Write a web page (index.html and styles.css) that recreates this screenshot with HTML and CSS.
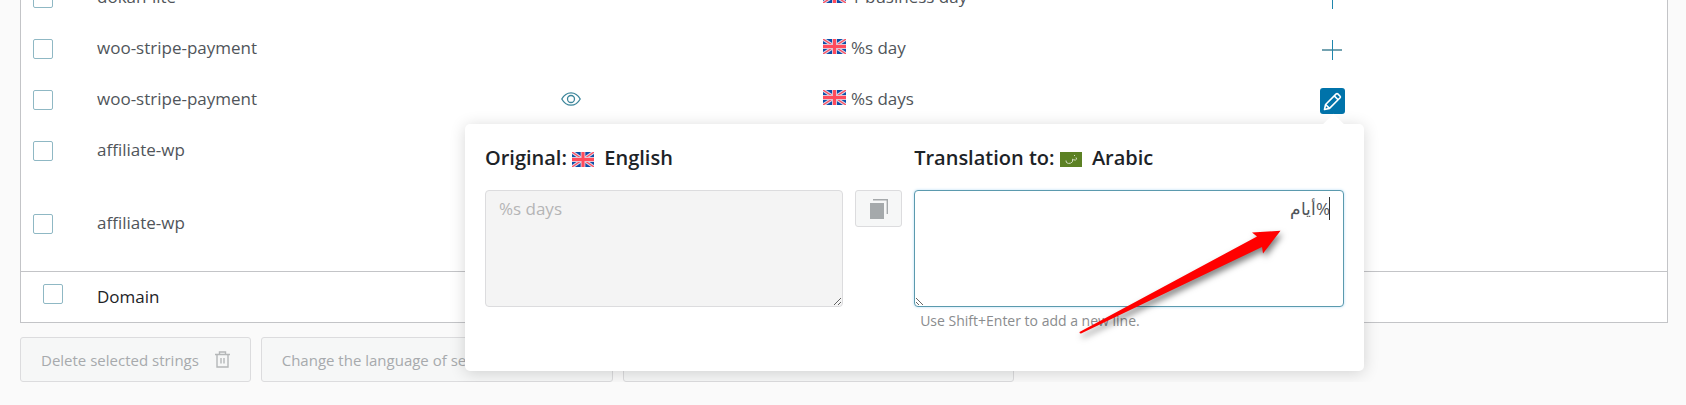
FILE: index.html
```
<!DOCTYPE html>
<html lang="en">
<head>
    <meta charset="UTF-8">
    <meta name="viewport" content="width=device-width, initial-scale=1.0">
    <title>String Translation</title>
    <link rel="stylesheet" href="styles.css">
</head>
<body>
  <svg width="0" height="0" class="sprite" aria-hidden="true">
    <symbol id="flag-en" viewBox="0 0 23 15" preserveAspectRatio="none">
      <rect width="23" height="15" fill="#0b4ea8"/>
      <path d="M0 0L23 15M23 0L0 15" stroke="#dcd5e6" stroke-width="3.4"/>
      <path d="M0 0L23 15M23 0L0 15" stroke="#ff4b5c" stroke-width="1.2"/>
      <path d="M11.5 0V15M0 7.5H23" stroke="#e3c3d2" stroke-width="5"/>
      <path d="M11.5 0V15M0 7.5H23" stroke="#ff4b5c" stroke-width="3"/>
    </symbol>
    <symbol id="plus" viewBox="0 0 20 20">
      <path d="M0 10H20" stroke="#74a3b1" stroke-width="2"/>
      <path d="M10.5 0V20" stroke="#1f86ad" stroke-width="1"/>
    </symbol>
  </svg>
  <div class="wrap">
    <table class="strings">
      <colgroup>
        <col class="col-check">
        <col class="col-domain">
        <col class="col-view">
        <col class="col-string">
        <col>
      </colgroup>
      <tbody>
        <tr>
          <td class="check"><input type="checkbox" aria-label="Select dokan-lite"></td>
          <td>dokan-lite</td>
          <td></td>
          <td><svg class="flag"><use href="#flag-en"/></svg>1 business day</td>
          <td class="action"><button class="add" aria-label="Add translation"><svg width="20" height="20"><use href="#plus"/></svg></button></td>
        </tr>
        <tr>
          <td class="check"><input type="checkbox" aria-label="Select woo-stripe-payment"></td>
          <td>woo-stripe-payment</td>
          <td></td>
          <td><svg class="flag"><use href="#flag-en"/></svg>%s day</td>
          <td class="action"><button class="add" aria-label="Add translation"><svg width="20" height="20"><use href="#plus"/></svg></button></td>
        </tr>
        <tr>
          <td class="check"><input type="checkbox" aria-label="Select woo-stripe-payment"></td>
          <td>woo-stripe-payment</td>
          <td>
            <button class="view" aria-label="View in page">
              <svg width="20" height="14" viewBox="0 0 20 14" fill="none" stroke="#3d869b" stroke-width="1.3">
                <path d="M.8 7C3 3 6.2 .8 10 .8S17 3 19.2 7C17 11 13.8 13.2 10 13.2S3 11 .8 7Z"/>
                <circle cx="10" cy="7" r="3.5"/>
              </svg>
            </button>
          </td>
          <td><svg class="flag"><use href="#flag-en"/></svg>%s days</td>
          <td class="action">
            <div class="editor">
              <button class="edit" aria-label="Edit translation">
                <svg width="19" height="19" viewBox="0 0 19 19" fill="none" stroke="#fff" stroke-width="1.6" stroke-linejoin="round">
                  <path d="M1.5 17.5L2.6 12.5L13.2 1.9Q14 1.2 14.8 1.9L17.1 4.2Q17.8 5 17.1 5.8L6.5 16.4Z"/>
                  <path d="M11.2 3.9L15.1 7.8M2.6 12.5L6.5 16.4"/>
                </svg>
              </button>
              <div class="popover">
                <div class="original">
                  <label for="original">Original: <svg class="flag"><use href="#flag-en"/></svg> English</label>
                  <textarea id="original" disabled>%s days</textarea>
                </div>
                <button class="copy" aria-label="Copy original" disabled>
                  <svg width="18" height="20" viewBox="0 0 18 20">
                    <path d="M0 4H14V20H0Z" fill="#a5a9ab"/>
                    <path d="M3 .7H17.3V15" fill="none" stroke="#a5a9ab" stroke-width="1.4"/>
                  </svg>
                </button>
                <div class="translation">
                  <label for="translation">Translation to:
                    <svg class="flag" viewBox="0 0 22 15">
                      <rect width="22" height="15" fill="#5c8124"/>
                      <path d="M16 5.5q1.5 2-.5 2.5-2 .2-3-.8M12.5 7.2q1 3-2 4-4.5 1-4.500-2.700M14.5 3v1" fill="none" stroke="#d4dfc2"/>
                    </svg>
                    Arabic</label>
                  <div class="field">
                    <textarea id="translation" dir="rtl" lang="ar">%أيام</textarea>
                  </div>
                  <p class="hint">Use Shift+Enter to add a new line.</p>
                </div>
                <svg class="pointer" width="202" height="104" viewBox="0 0 202 104" aria-hidden="true">
                  <path d="M.5 102L178 6.5L173 2.5L201.5 .8L184 23.5L183 17L2 103.5Q.3 103.5 .5 102Z" fill="#f00"/>
                </svg>
              </div>
            </div>
          </td>
        </tr>
        <tr class="tall">
          <td class="check"><input type="checkbox" aria-label="Select affiliate-wp"></td>
          <td>affiliate-wp</td>
          <td></td>
          <td></td>
          <td></td>
        </tr>
        <tr class="last">
          <td class="check"><input type="checkbox" aria-label="Select affiliate-wp"></td>
          <td>affiliate-wp</td>
          <td></td>
          <td></td>
          <td></td>
        </tr>
      </tbody>
      <tfoot>
        <tr>
          <td class="check"><input type="checkbox" aria-label="Select all"></td>
          <th scope="col">Domain</th>
          <td></td>
          <td></td>
          <td></td>
        </tr>
      </tfoot>
    </table>
    <div class="bulk-actions">
      <button class="delete" disabled>Delete selected strings
        <svg width="15" height="17" viewBox="0 0 15 17" fill="none" stroke="#b4b7b8" stroke-width="1.4">
          <path d="M0 3.5H15M4.5 3V1H10.5V3M2 4V16H13V4M6 7V12.5M9 7V12.5"/>
        </svg>
      </button>
      <button class="language" disabled>Change the language of selected strings</button>
      <button class="priority" disabled>Change translation priority of selected strings</button>
    </div>
  </div>
</body>
</html>
```
FILE: styles.css
```
* {
  box-sizing: border-box;
}
body {
  margin: 0;
  overflow: hidden;
  background-color: #fafafa;
  color: #50555a;
  font-family: "Open Sans", "Noto Sans", sans-serif;
  font-size: 17px;
  line-height: 24px;
}
button, textarea {
  font: inherit;
}
button {
  padding: 0;
  border: none;
  background: none;
  cursor: pointer;
}
svg {
  display: block;
}
.sprite {
  position: absolute;
}
/* list is scrolled part way down */
.wrap {
  margin: -23px 18px 0 20px;
}
.strings {
  width: 100%;
  table-layout: fixed;
  border-collapse: separate;
  border-spacing: 0;
  border: 1px solid #c3c4c7;
  background-color: #fff;
}
.col-check {
  width: 76px;
}
.col-domain {
  width: 28.2%;
}
.col-view {
  width: 15.9%;
}
.col-string {
  width: 30.2%;
}
.strings td, .strings th {
  height: 51px;
  padding: 7px 0;
  vertical-align: top;
  text-align: left;
  font-weight: normal;
}
.strings .check {
  padding: 10px 12px;
}
.strings .tall td {
  height: 73px;
}
.strings .last td {
  height: 67px;
}
.strings tfoot td, .strings tfoot th {
  height: 50px;
  padding: 13px 0;
  border-top: 1px solid #c3c4c7;
  color: #1d2327;
}
.strings tfoot .check {
  padding: 12px 22px;
}
input[type="checkbox"] {
  appearance: none;
  display: block;
  width: 20px;
  height: 20px;
  margin: 0;
  border: 1px solid #8fb8c4;
  border-radius: 2px;
  background-color: #fff;
}
.flag {
  display: inline-block;
  width: 23px;
  height: 15px;
  margin-right: 5px;
}
.view {
  display: block;
  margin-top: 5px;
}
.strings .action {
  padding: 8px 0;
}
.add {
  display: block;
  margin: 3px 2px;
}
.editor {
  position: relative;
  width: 25px;
}
.edit {
  display: flex;
  align-items: center;
  justify-content: center;
  width: 25px;
  height: 26px;
  border-radius: 3px;
  background-color: #0073aa;
}
.popover {
  position: absolute;
  top: 36px;
  right: -19px;
  display: flex;
  align-items: flex-start;
  gap: 12px;
  width: 899px;
  padding: 20px 20px 38px;
  border-radius: 5px;
  background-color: #fff;
  box-shadow: 0 2px 16px rgba(0,0,0,0.16);
}
.popover::before {
  content: "";
  position: absolute;
  top: -6px;
  right: 20px;
  width: 21px;
  height: 21px;
  background-color: #fff;
  transform: rotate(45deg);
}
.original {
  flex: 5;
}
.translation {
  flex: 6;
}
.popover label {
  display: block;
  margin-bottom: 18px;
  color: #1d2327;
  font-size: 20px;
  font-weight: 600;
  line-height: 28px;
}
.popover .flag {
  width: 22px;
  vertical-align: -2px;
}
.popover textarea {
  display: block;
  width: 100%;
  height: 117px;
  margin: 0;
  padding: 6px 13px;
  border: 1px solid #dcdcde;
  border-radius: 4px;
  outline: none;
  color: #50555a;
}
.popover textarea:disabled {
  background-color: #f4f4f4;
  color: #b4b5b6;
}
.popover #translation {
  border-color: #5b9aae;
  box-shadow: 0 0 3px #b5dcf5;
}
.field {
  position: relative;
}
/* text caret */
.field::after {
  content: "";
  position: absolute;
  top: 7px;
  right: 14px;
  width: 1px;
  height: 23px;
  background-color: #333;
}
.copy {
  display: flex;
  align-items: center;
  justify-content: center;
  width: 47px;
  height: 37px;
  margin-top: 46px;
  border: 1px solid #dcdcde;
  border-radius: 3px;
  background-color: #f6f7f7;
}
.hint {
  margin: 2px 6px 0;
  color: #8a8c8e;
  font-size: 14px;
}
.pointer {
  position: absolute;
  top: 106px;
  right: 83px;
  overflow: visible;
  filter: drop-shadow(2px 4px 3px rgba(0,0,0,0.5));
}
.bulk-actions {
  display: flex;
  gap: 10px;
  margin-top: 14px;
}
.bulk-actions button {
  display: flex;
  align-items: center;
  justify-content: space-between;
  height: 45px;
  padding: 0 20px;
  border: 1px solid #dcdcde;
  border-radius: 3px;
  background-color: #f6f7f7;
  color: #a7aaad;
  font-size: 15px;
}
.bulk-actions .delete {
  width: 14%;
}
.bulk-actions .language {
  width: 21.4%;
}
.bulk-actions .priority {
  width: 23.7%;
}
```
